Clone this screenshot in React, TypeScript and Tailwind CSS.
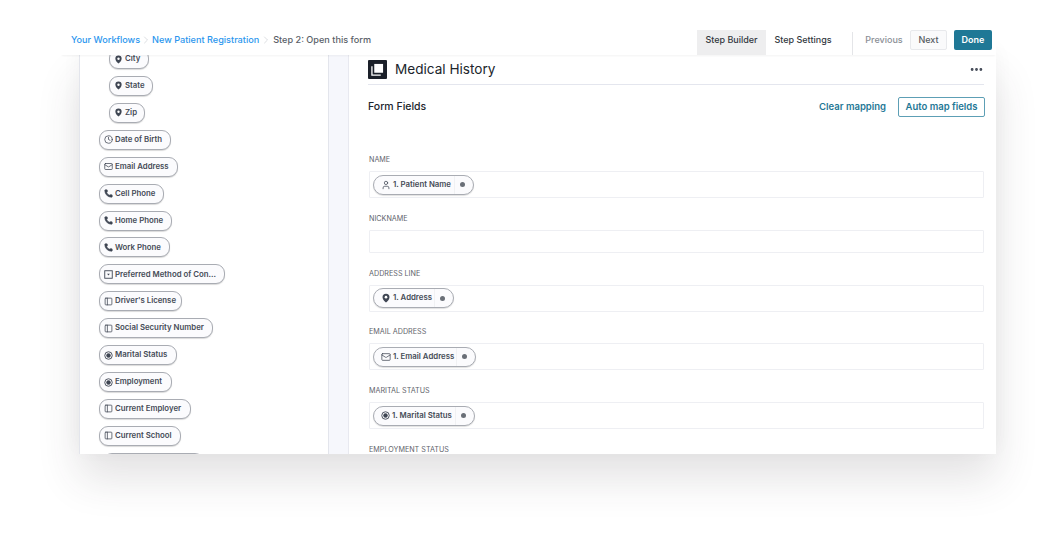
import { ChevronRight, Clock, Mail, MoreHorizontal, PanelLeft, Phone, User } from 'lucide-react';
import type { ReactNode } from 'react';

const font = { fontFamily: 'Inter, "Noto Sans", sans-serif' };

function RadioIcon() {
    return (
        <svg className="w-[9px] h-[9px]" viewBox="0 0 12 12" fill="none">
            <circle cx="6" cy="6" r="5" stroke="#3f4653" strokeWidth="1.2" />
            <circle cx="6" cy="6" r="3" fill="#3f4653" />
        </svg>
    );
}

function SelectIcon() {
    return (
        <svg className="w-[9px] h-[9px]" viewBox="0 0 12 12" fill="none">
            <rect x="1" y="1" width="10" height="10" stroke="#3f4653" strokeWidth="1.2" />
            <path d="M4.2 5h3.6L6 7.2z" fill="#3f4653" />
        </svg>
    );
}

function PinIcon({ className }: { className: string }) {
    return (
        <svg className={className} viewBox="0 0 12 12">
            <path d="M6 .8a4.2 4.2 0 0 0-4.2 4.2c0 2.8 3 5.5 4.2 6.4 1.2-.9 4.2-3.6 4.2-6.4A4.2 4.2 0 0 0 6 .8z" fill="#3f4653" />
            <circle cx="6" cy="5" r="1.6" fill="#fff" />
        </svg>
    );
}

const pin = <PinIcon className="w-[9px] h-[9px]" />;
const clock = <Clock className="w-[9px] h-[9px] text-[#3f4653]" strokeWidth={2} />;
const mail = <Mail className="w-[9px] h-[9px] text-[#3f4653]" strokeWidth={2} />;
const phone = <Phone className="w-[9px] h-[9px] text-[#3f4653]" fill="#3f4653" strokeWidth={1.5} />;
const panel = <PanelLeft className="w-[9px] h-[9px] text-[#3f4653]" strokeWidth={2} />;

const pills: { label: string; icon: ReactNode; cls: string }[] = [
    { label: 'City', icon: pin, cls: 'ml-[29px] w-[40px]' },
    { label: 'State', icon: pin, cls: 'ml-[29px] w-[44px]' },
    { label: 'Zip', icon: pin, cls: 'ml-[29px] w-[36px]' },
    { label: 'Date of Birth', icon: clock, cls: 'ml-[19px] w-[72px]' },
    { label: 'Email Address', icon: mail, cls: 'ml-[19px] w-[79px]' },
    { label: 'Cell Phone', icon: phone, cls: 'ml-[19px] w-[65px]' },
    { label: 'Home Phone', icon: phone, cls: 'ml-[19px] w-[73px]' },
    { label: 'Work Phone', icon: phone, cls: 'ml-[19px] w-[71px]' },
    { label: 'Preferred Method of Con...', icon: <SelectIcon />, cls: 'ml-[19px] w-[126px]' },
    { label: "Driver's License", icon: panel, cls: 'ml-[19px] w-[83px]' },
    { label: 'Social Security Number', icon: panel, cls: 'ml-[19px] w-[114px]' },
    { label: 'Marital Status', icon: <RadioIcon />, cls: 'ml-[19px] w-[78px]' },
    { label: 'Employment', icon: <RadioIcon />, cls: 'ml-[19px] w-[73px]' },
    { label: 'Current Employer', icon: panel, cls: 'ml-[19px] w-[92px]' },
    { label: 'Current School', icon: panel, cls: 'ml-[19px] w-[82px]' },
    { label: '', icon: null, cls: 'ml-[23px] w-[101px]' },
];

function Pill({ label, icon, cls }: { label: string; icon: ReactNode; cls: string }) {
    return (
        <div className={`h-[20px] shrink-0 rounded-[9px] border border-[#a9acb3] bg-[#fbfbfd] shadow-[0_1px_1px_rgba(0,0,0,0.15)] flex items-center gap-[2px] pl-[4px] ${cls}`}>
            {icon}
            <span className="text-[7.8px] font-semibold text-[#454b57] whitespace-nowrap">{label}</span>
        </div>
    );
}

function MappedPill({ label, icon, cls }: { label: string; icon: ReactNode; cls: string }) {
    return (
        <div className={`h-[20px] rounded-[10px] border border-[#a9acb3] bg-[#fbfbfd] shadow-[0_1px_1px_rgba(0,0,0,0.12)] flex items-center pl-[7px] ${cls}`}>
            {icon}
            <span className="ml-[2px] text-[7.8px] font-semibold text-[#454b57] whitespace-nowrap">{label}</span>
            <span className="ml-auto h-full border-l border-[#f0f1f3] flex items-center pl-[5px] pr-[8px]">
                <span className="w-[5px] h-[5px] rounded-full bg-[#6a6f77]" />
            </span>
        </div>
    );
}

const fieldIcon = 'w-[10px] h-[10px] text-[#3f4653]';

const fields: { label: string; pill?: { label: string; icon: ReactNode; cls: string }; cls: string }[] = [
    { label: 'NAME', cls: 'h-[27px]', pill: { label: '1. Patient Name', icon: <User className={fieldIcon} strokeWidth={1.8} />, cls: 'w-[101px]' } },
    { label: 'NICKNAME', cls: 'h-[23px]' },
    { label: 'ADDRESS LINE', cls: 'h-[27px]', pill: { label: '1. Address', icon: <PinIcon className={fieldIcon} />, cls: 'w-[81px]' } },
    { label: 'EMAIL ADDRESS', cls: 'h-[27px]', pill: { label: '1. Email Address', icon: <Mail className={fieldIcon} strokeWidth={1.8} />, cls: 'w-[103px]' } },
    { label: 'MARITAL STATUS', cls: 'h-[27px]', pill: { label: '1. Marital Status', icon: <RadioIcon />, cls: 'w-[102px]' } },
];

export default function App() {
    return (
        <div className="w-[1058px] h-[544px] overflow-hidden bg-white pt-[24px]" style={font}>
            <header className="relative z-10 ml-[61px] w-[935px] h-[31px] bg-white shadow-[0_2px_2px_-1px_rgba(0,0,0,0.05)] flex items-start pl-[10px]">
                <nav className="flex items-center h-[31px] text-[9.15px] font-medium">
                    <span className="text-[#2b96ee]">Your Workflows</span>
                    <ChevronRight className="w-[12px] h-[12px] text-[#c4c7cc]" strokeWidth={1.2} />
                    <span className="text-[#2b96ee]">New Patient Registration</span>
                    <ChevronRight className="w-[12px] h-[12px] ml-[1px] mr-[1px] text-[#c4c7cc]" strokeWidth={1.2} />
                    <span className="text-[#5a5f68]">Step 2: Open this form</span>
                </nav>
                <div className="ml-auto flex items-start pr-[4px]">
                    <div className="mt-[6px] h-[25px] w-[69px] bg-[#eeeeef] flex items-center justify-center pb-[5px] text-[9px] font-medium text-[#33383f]">
                        Step Builder
                    </div>
                    <div className="mt-[6px] h-[25px] ml-[8px] w-[58px] flex items-center justify-center pb-[5px] text-[9px] font-medium text-[#33383f] whitespace-nowrap">
                        Step Settings
                    </div>
                    <div className="mt-[8px] ml-[20px] h-[23px] w-px bg-[#e4e5e8]" />
                    <div className="mt-[6px] ml-[11px] h-[20px] w-[40px] flex items-center justify-center text-[9px] font-medium text-[#8b8f96]">
                        Previous
                    </div>
                    <div className="mt-[6px] ml-[6px] h-[20px] w-[37px] rounded-[2px] border border-[#e8e9ec] bg-[#fafafb] flex items-center justify-center text-[9px] font-medium text-[#555a62]">
                        Next
                    </div>
                    <div className="mt-[6px] ml-[7px] h-[20px] w-[38px] rounded-[2px] bg-[#1f7896] flex items-center justify-center text-[9px] font-semibold text-white">
                        Done
                    </div>
                </div>
            </header>

            <div className="ml-[79px] w-[917px] h-[399px] flex overflow-hidden bg-white shadow-[0_24px_40px_rgba(60,50,60,0.14),0_-6px_20px_rgba(60,50,60,0.04)]">
                <aside className="w-[250px] shrink-0 bg-white border-l border-r border-[#e3e5ec] overflow-hidden">
                    <div className="flex flex-col gap-[6.93px] -mt-[6px]">
                        {pills.map((p, i) => (
                            <Pill key={i} {...p} />
                        ))}
                    </div>
                </aside>
                <div className="w-[19px] shrink-0 bg-[#f6f7fc]" />
                <main className="flex-1 min-w-0 border-l border-[#e8e9f0] pl-[19px] pr-[12px] overflow-hidden bg-white">
                    <div className="h-[30px] border-b border-[#e4e6ee] flex items-start pt-[5px]">
                        <div className="w-[19px] h-[19px] rounded-[1px] bg-[#1b2029] flex items-center justify-center">
                            <svg className="w-[13px] h-[13px]" viewBox="0 0 14 14" fill="none">
                                <path d="M1 3.5V13h9.5" stroke="#fff" strokeWidth="1.4" />
                                <rect x="3.5" y="1" width="9.5" height="9.5" fill="#fff" />
                            </svg>
                        </div>
                        <h1 className="ml-[8px] text-[13.6px] leading-[19px] text-[#20252c]">Medical History</h1>
                        <MoreHorizontal className="ml-auto mt-[2px] w-[15px] h-[15px] text-[#3f4653]" strokeWidth={2.5} />
                    </div>
                    <div className="mt-[12px] h-[20px] flex items-center">
                        <h2 className="text-[10.5px] font-medium text-[#20252c]">Form Fields</h2>
                        <span className="ml-auto text-[9.5px] font-semibold text-[#1f7896]">Clear mapping</span>
                        <button className="ml-[12px] h-[20px] w-[87px] -mr-[1px] rounded-[2px] border border-[#5d9fb5] text-[9.5px] font-semibold text-[#1f7896]">
                            Auto map fields
                        </button>
                    </div>
                    <div className="mt-[37px] flex flex-col gap-[14.8px]">
                        {fields.map((f) => (
                            <div key={f.label} className="flex flex-col gap-[6px] pl-[1px]">
                                <label className="text-[7.2px] leading-[11px] text-[#5f646c]">{f.label}</label>
                                <div className={`${f.cls} border border-[#eeeff3] rounded-[1px] flex items-center pl-[3px]`}>
                                    {f.pill && <MappedPill {...f.pill} />}
                                </div>
                            </div>
                        ))}
                        <label className="pl-[1px] text-[7.2px] leading-[11px] text-[#5f646c]">EMPLOYMENT STATUS</label>
                    </div>
                </main>
            </div>
        </div>
    );
}
